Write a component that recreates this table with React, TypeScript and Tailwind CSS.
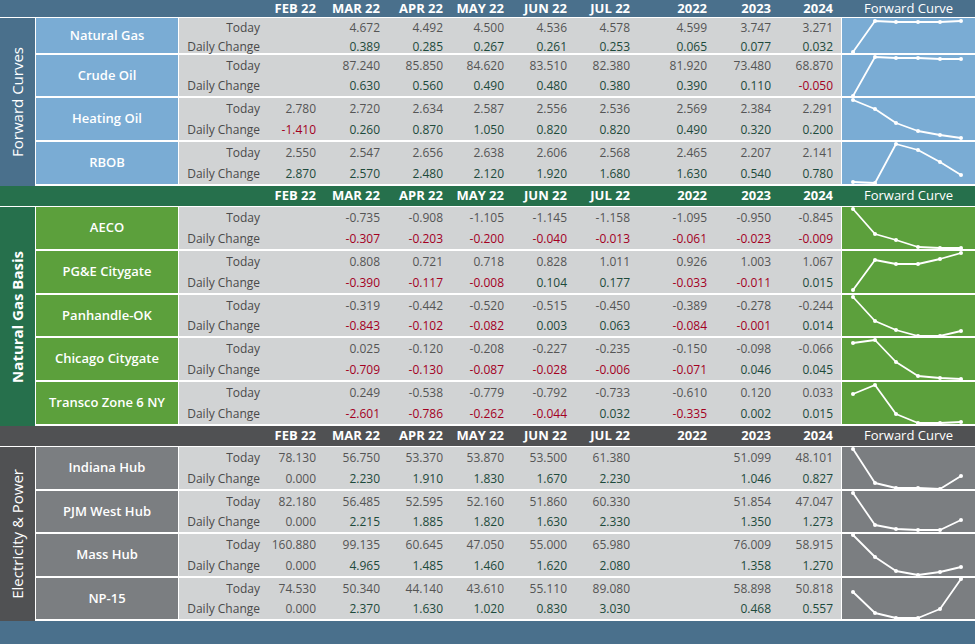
import React from "react";

const colW = ["w-[56px]", "w-[64px]", "w-[63px]", "w-[61px]", "w-[63px]", "w-[63px]", "w-[77px]", "w-[64px]", "w-[62px]"];
const heads = ["FEB 22", "MAR 22", "APR 22", "MAY 22", "JUN 22", "JUL 22", "2022", "2023", "2024"];
const XS = [11, 33, 54, 76, 98, 119];

type Row = { name: string; h: string; sh: number; today: string[]; dc: string[]; pts: number[] };
type Section = {
  title: string;
  titleCls: string;
  headCls: string;
  nameCls: string;
  headH: string;
  rows: Row[];
};

const sections: Section[] = [
  {
    title: "Forward Curves",
    titleCls: "font-normal text-[15px]",
    headCls: "bg-[#4a708c]",
    nameCls: "bg-[#7aacd4]",
    headH: "h-[18px]",
    rows: [
      { name: "Natural Gas", h: "h-[37px]", sh: 35, today: ["", "4.672", "4.492", "4.500", "4.536", "4.578", "4.599", "3.747", "3.271"], dc: ["", "0.389", "0.285", "0.267", "0.261", "0.253", "0.065", "0.077", "0.032"], pts: [34, 3, 4, 4, 4, 3] },
      { name: "Crude Oil", h: "h-[43px]", sh: 41, today: ["", "87.240", "85.850", "84.620", "83.510", "82.380", "81.920", "73.480", "68.870"], dc: ["", "0.630", "0.560", "0.490", "0.480", "0.380", "0.390", "0.110", "-0.050"], pts: [41, 2, 3, 3, 4, 4] },
      { name: "Heating Oil", h: "h-[44px]", sh: 42, today: ["2.780", "2.720", "2.634", "2.587", "2.556", "2.536", "2.569", "2.384", "2.291"], dc: ["-1.410", "0.260", "0.870", "1.050", "0.820", "0.820", "0.490", "0.320", "0.200"], pts: [2, 11, 25, 33, 37, 40] },
      { name: "RBOB", h: "h-[44px]", sh: 42, today: ["2.550", "2.547", "2.656", "2.638", "2.606", "2.568", "2.465", "2.207", "2.141"], dc: ["2.870", "2.570", "2.480", "2.120", "1.920", "1.680", "1.630", "0.540", "0.780"], pts: [40, 41, 2, 8, 20, 33] },
    ],
  },
  {
    title: "Natural Gas Basis",
    titleCls: "font-bold text-[15px]",
    headCls: "bg-[#26704c]",
    nameCls: "bg-[#5ca03c]",
    headH: "h-[21px]",
    rows: [
      { name: "AECO", h: "h-[44px]", sh: 42, today: ["", "-0.735", "-0.908", "-1.105", "-1.145", "-1.158", "-1.095", "-0.950", "-0.845"], dc: ["", "-0.307", "-0.203", "-0.200", "-0.040", "-0.013", "-0.061", "-0.023", "-0.009"], pts: [2, 27, 33, 40, 41, 41] },
      { name: "PG&E Citygate", h: "h-[44px]", sh: 42, today: ["", "0.808", "0.721", "0.718", "0.828", "1.011", "0.926", "1.003", "1.067"], dc: ["", "-0.390", "-0.117", "-0.008", "0.104", "0.177", "-0.033", "-0.011", "0.015"], pts: [39, 9, 13, 13, 8, 2] },
      { name: "Panhandle-OK", h: "h-[43px]", sh: 41, today: ["", "-0.319", "-0.442", "-0.520", "-0.515", "-0.450", "-0.389", "-0.278", "-0.244"], dc: ["", "-0.843", "-0.102", "-0.082", "0.003", "0.063", "-0.084", "-0.001", "0.014"], pts: [2, 26, 35, 41, 41, 36] },
      { name: "Chicago Citygate", h: "h-[44px]", sh: 42, today: ["", "0.025", "-0.120", "-0.208", "-0.227", "-0.235", "-0.150", "-0.098", "-0.066"], dc: ["", "-0.709", "-0.130", "-0.087", "-0.028", "-0.006", "-0.071", "0.046", "0.045"], pts: [5, 2, 24, 38, 40, 41] },
      { name: "Transco Zone 6 NY", h: "h-[44px]", sh: 42, today: ["", "0.249", "-0.538", "-0.779", "-0.792", "-0.733", "-0.610", "0.120", "0.033"], dc: ["", "-2.601", "-0.786", "-0.262", "-0.044", "0.032", "-0.335", "0.002", "0.015"], pts: [12, 3, 32, 41, 41, 40] },
    ],
  },
  {
    title: "Electricity & Power",
    titleCls: "font-normal text-[15px]",
    headCls: "bg-[#505153]",
    nameCls: "bg-[#7b7e81]",
    headH: "h-[21px]",
    rows: [
      { name: "Indiana Hub", h: "h-[44px]", sh: 42, today: ["78.130", "56.750", "53.370", "53.870", "53.500", "61.380", "", "51.099", "48.101"], dc: ["0.000", "2.230", "1.910", "1.830", "1.670", "2.230", "", "1.046", "0.827"], pts: [2, 36, 41, 41, 42, 29] },
      { name: "PJM West Hub", h: "h-[43px]", sh: 41, today: ["82.180", "56.485", "52.595", "52.160", "51.860", "60.330", "", "51.854", "47.047"], dc: ["0.000", "2.215", "1.885", "1.820", "1.630", "2.330", "", "1.350", "1.273"], pts: [2, 34, 38, 39, 39, 29] },
      { name: "Mass Hub", h: "h-[44px]", sh: 42, today: ["160.880", "99.135", "60.645", "47.050", "55.000", "65.980", "", "76.009", "58.915"], dc: ["0.000", "4.965", "1.485", "1.460", "1.620", "2.080", "", "1.358", "1.270"], pts: [1, 23, 37, 41, 38, 33] },
      { name: "NP-15", h: "h-[43px]", sh: 41, today: ["74.530", "50.340", "44.140", "43.610", "55.110", "89.080", "", "58.898", "50.818"], dc: ["0.000", "2.370", "1.630", "1.020", "0.830", "3.030", "", "0.468", "0.557"], pts: [14, 35, 40, 40, 31, 1] },
    ],
  },
];

function Spark({ pts, h }: { pts: number[]; h: number }) {
  const points = pts.map((y, i) => `${XS[i]},${y}`).join(" ");
  return (
    <svg width={133} height={h} viewBox={`0 0 133 ${h}`} className="block overflow-hidden">
      <polyline points={points} fill="none" stroke="#ffffff" strokeWidth={1.8} strokeLinejoin="round" />
      {pts.map((y, i) => (
        <circle key={i} cx={XS[i]} cy={y} r={2} fill="#ffffff" />
      ))}
    </svg>
  );
}

function Header({ s }: { s: Section }) {
  return (
    <div className={`flex ${s.headH} items-center border-b border-white text-white text-[13px] ${s.headCls}`}>
      <div className="w-[260px] shrink-0" />
      {heads.map((h, i) => (
        <div key={h} className={`${colW[i]} shrink-0 text-right font-bold`}>
          {h}
        </div>
      ))}
      <div className="w-[9px] shrink-0" />
      <div className="w-[133px] shrink-0 text-center font-normal">Forward Curve</div>
    </div>
  );
}

function valCls(v: string, isDc: boolean) {
  if (!isDc || v === "0.000") return "text-[#555555]";
  return v.startsWith("-") ? "text-[#a3001f]" : "text-[#1d4a3b]";
}

function DataRow({ r, s }: { r: Row; s: Section }) {
  return (
    <div className={`flex ${r.h} border-b-2 border-white`}>
      <div className={`w-[143px] shrink-0 border-r border-white flex items-center justify-center text-white font-semibold text-[13px] ${s.nameCls}`}>
        {r.name}
      </div>
      <div className="flex-1 bg-[#d1d3d4] flex flex-col text-[12px]">
        {[r.today, r.dc].map((vals, k) => (
          <div key={k} className="flex flex-1 items-center pt-[1px]">
            <div className="w-[81px] shrink-0 text-right text-[#4a4a4a]">{k === 0 ? "Today" : "Daily Change"}</div>
            {vals.map((v, i) => (
              <div key={i} className={`${colW[i]} shrink-0 text-right ${valCls(v, k === 1)}`}>
                {v}
              </div>
            ))}
          </div>
        ))}
      </div>
      <div className={`w-[134px] shrink-0 border-l border-white overflow-hidden ${s.nameCls}`}>
        <Spark pts={r.pts} h={r.sh} />
      </div>
    </div>
  );
}

function SectionBlock({ s }: { s: Section }) {
  return (
    <div>
      <Header s={s} />
      <div className="flex">
        <div className={`w-[36px] shrink-0 border-r border-white flex items-center justify-center ${s.headCls}`}>
          <span className={`[writing-mode:vertical-rl] rotate-180 text-white whitespace-nowrap ${s.titleCls}`}>{s.title}</span>
        </div>
        <div className="flex-1 flex flex-col">
          {s.rows.map((r) => (
            <DataRow key={r.name} r={r} s={s} />
          ))}
        </div>
      </div>
    </div>
  );
}

export default function App() {
  return (
    <div
      className="w-[975px] h-[644px] flex flex-col bg-white overflow-hidden"
      style={{ fontFamily: '"Open Sans", "Noto Sans", sans-serif' }}
    >
      {sections.map((s) => (
        <SectionBlock key={s.title} s={s} />
      ))}
      <div className="flex-1 bg-[#4a708c]" />
    </div>
  );
}
